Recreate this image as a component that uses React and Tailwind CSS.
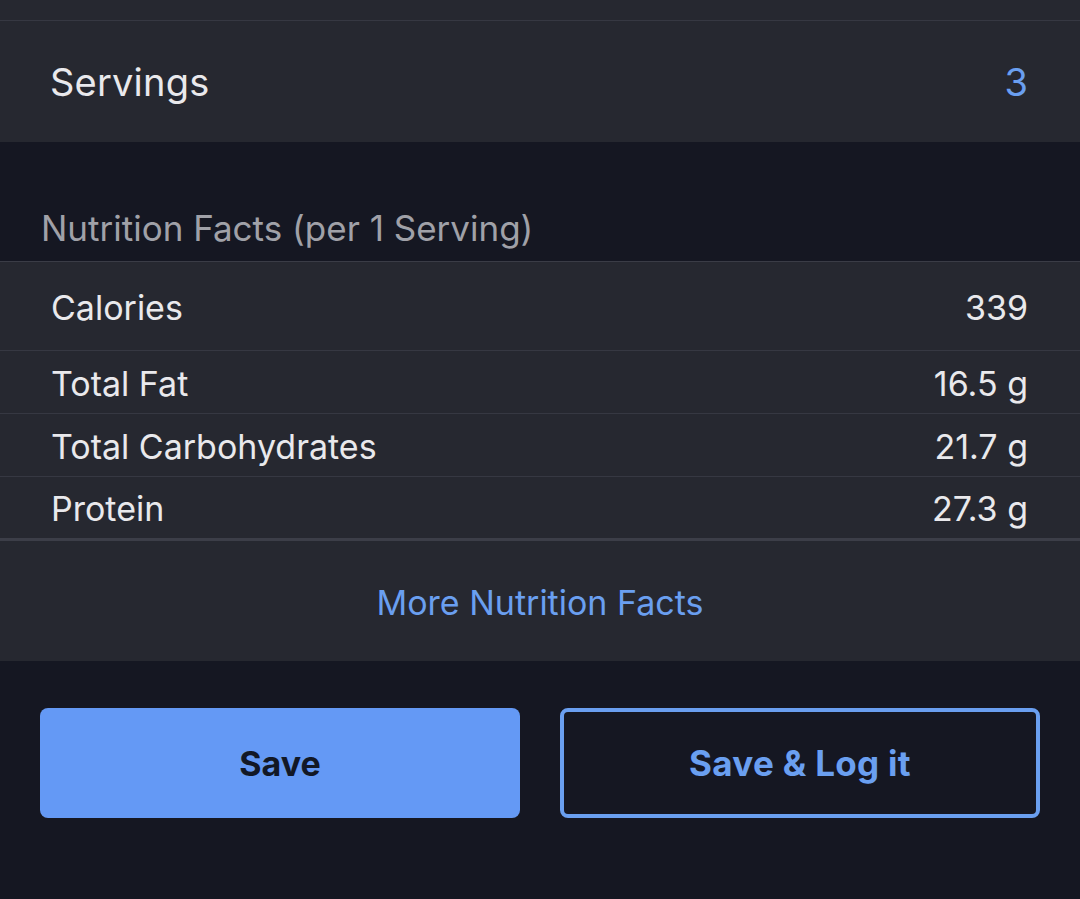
export default function App() {
  const rows = [
    { label: "Total Fat", value: "16.5 g" },
    { label: "Total Carbohydrates", value: "21.7 g" },
    { label: "Protein", value: "27.3 g" },
  ];

  return (
    <div
      className="min-h-screen w-full bg-[#151722] text-[#e9e9ec] flex flex-col"
      style={{ fontFamily: "Inter, 'Noto Sans', sans-serif" }}
    >
      {/* Servings */}
      <div className="bg-[#262830]">
        <div className="h-[21px] border-b border-[#363842]" />
        <div className="h-[121px] flex items-center justify-between pl-[50px] pr-[52px] pt-[2px]">
          <span className="text-[38px] tracking-[0.2px]">Servings</span>
          <span className="text-[38px] text-[#6a9ff0]">3</span>
        </div>
      </div>

      {/* Nutrition header */}
      <div className="h-[119px] flex items-end pl-[41px] pb-[7px]">
        <span className="text-[35px] text-[#a0a1a8]">Nutrition Facts (per 1 Serving)</span>
      </div>

      {/* Nutrition table */}
      <div className="bg-[#262830] border-t border-[#3a3c46]">
        <div className="h-[89px] flex items-center justify-between pl-[51px] pr-[52px] pt-[2px] border-b border-[#363842]">
          <span className="text-[34px]">Calories</span>
          <span className="text-[34px]">339</span>
        </div>
        {rows.map((r, i) => (
          <div
            key={r.label}
            className={
              i === rows.length - 1
                ? "h-[64px] flex items-center justify-between pl-[51px] pr-[52px] pt-[1px] border-b-[3px] border-[#3c3e48]"
                : "h-[63px] flex items-center justify-between pl-[51px] pr-[52px] pt-[2px] border-b border-[#363842]"
            }
          >
            <span className="text-[34px]">{r.label}</span>
            <span className="text-[34px]">{r.value}</span>
          </div>
        ))}
        <div className="h-[120px] flex items-center justify-center pt-[3px]">
          <span className="text-[34px] text-[#6a9ff0]">More Nutrition Facts</span>
        </div>
      </div>

      {/* Buttons */}
      <div className="grid grid-cols-2 gap-[40px] px-[40px] pt-[47px]">
        <button className="h-[110px] rounded-[8px] bg-[#6499f5] text-[#121826] text-[34px] font-bold">
          Save
        </button>
        <button className="h-[110px] rounded-[8px] border-4 border-[#6a9ff0] text-[#6a9ff0] text-[35px] font-bold tracking-[0.3px]">
          Save &amp; Log it
        </button>
      </div>
    </div>
  );
}
